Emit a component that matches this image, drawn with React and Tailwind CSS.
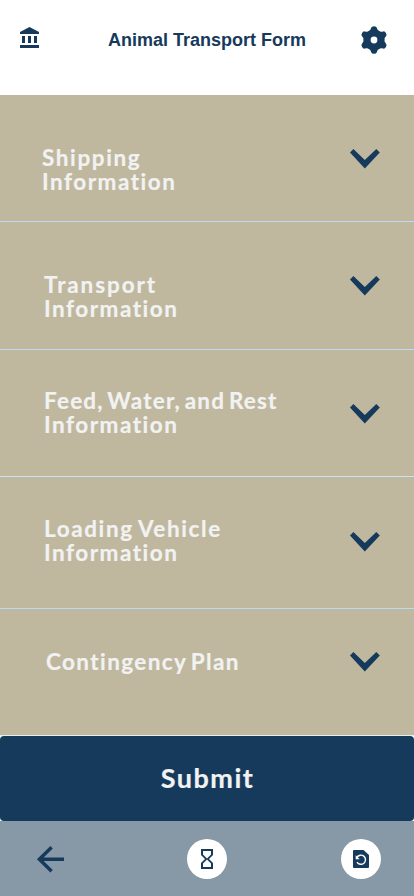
import React from "react";
import { MdHourglassEmpty } from "react-icons/md";

const sections = [
  { lines: ["Shipping", "Information"], row: "h-[127px]", text: "pl-[42px] pt-[51px]", first: "tracking-[1.6px]", icon: "pt-[53px]", line: "border-[#b9daf5]" },
  { lines: ["Transport", "Information"], row: "h-32", text: "pl-[44px] pt-[51px]", first: "tracking-[1.9px]", icon: "pt-[53px]", line: "border-[#b9daf5]" },
  { lines: ["Feed, Water, and Rest", "Information"], row: "h-[127px]", text: "pl-[44px] pt-[39px]", first: "tracking-[1.2px] [word-spacing:-3px]", icon: "pt-[53px]", line: "border-[#c9e3f3]" },
  { lines: ["Loading Vehicle", "Information"], row: "h-[132px]", text: "pl-[44px] pt-10", first: "tracking-[1.6px] [word-spacing:-2px]", icon: "pt-[54px]", line: "border-[#b9daf5]" },
  { lines: ["Contingency Plan"], row: "h-[127px]", text: "pl-[46px] pt-[41px]", first: "tracking-[1.4px] [word-spacing:-3px]", icon: "pt-[42px]", line: "border-[#e6eef0]" },
];

function Bank() {
  return (
    <svg className="h-6 w-6" viewBox="0 0 24 24" fill="currentColor">
      <path d="M4 10v7h3v-7H4zm6 0v7h3v-7h-3zM2 22h19v-3H2v3zm14-12v7h3v-7h-3zm-4.5-9L2 6v2h19V6l-9.5-5z" />
    </svg>
  );
}

function Gear() {
  return (
    <svg className="h-7 w-7" viewBox="-14 -14 28 28" fill="currentColor">
      <mask id="gear-hole">
        <rect x="-14" y="-14" width="28" height="28" fill="white" />
        <circle r="3.4" fill="black" />
      </mask>
      <g mask="url(#gear-hole)">
        {[0, 60, 120, 180, 240, 300].map((a) => (
          <path key={a} transform={`rotate(${a})`} d="M-6.1 -8.3Q-3.2 -9.4 -2.8 -12.2Q-2.5 -13.8 0 -13.8Q2.5 -13.8 2.8 -12.2Q3.2 -9.4 6.1 -8.3L6.1 0H-6.1Z" />
        ))}
      </g>
    </svg>
  );
}

function Chevron() {
  return (
    <svg className="h-[21px] w-[30px]" viewBox="0 0 30 21" fill="currentColor">
      <path d="M0 4.4L3.4 0.9L14.8 12L26.3 0.9L29.8 4.4L14.8 20.6Z" />
    </svg>
  );
}

function BackArrow() {
  return (
    <svg className="h-7 w-7" viewBox="0 0 28 28" fill="none" stroke="currentColor" strokeWidth="3.5">
      <path d="M28 14.2H3.5M15.6 2.2L3.4 14.2L15.6 26.2" />
    </svg>
  );
}

function RestorePage() {
  return (
    <svg className="h-[18px] w-4" viewBox="0 0 16 18" fill="none">
      <path d="M1 0H10.5L16 5V17Q16 18 15 18H1Q0 18 0 17V1Q0 0 1 0Z" fill="currentColor" />
      <path d="M3.9 7.4A4.6 4.6 0 1 1 4 12.2" stroke="white" strokeWidth="1.4" />
      <path d="M2.7 5.2V9.2H6.7Z" fill="white" />
    </svg>
  );
}

export default function App() {
  return (
    <div className="flex h-[896px] w-[414px] flex-col overflow-hidden bg-white font-['Liberation_Sans',sans-serif] text-[#163a5b]">
      <header className="flex h-[95px] items-start justify-between pl-[18px] pr-[26px] pt-[26px]">
        <Bank />
        <h1 className="pl-3 text-[18px] font-bold leading-7">Animal Transport Form</h1>
        <Gear />
      </header>
      <main>
        {sections.map((s) => (
          <section key={s.lines[0]} className={`flex items-start justify-between border-b bg-[#bfb89f] pr-[34px] ${s.row} ${s.line}`}>
            <h2 className={`whitespace-nowrap font-[Lato,sans-serif] text-[22.5px] font-bold leading-6 text-[#f2f2f2] [-webkit-text-stroke:0.2px_#f2f2f2] ${s.text}`}>
              {s.lines.map((l, i) => (
                <span key={l} className={`block ${i === 0 ? s.first : "tracking-[1.5px]"}`}>{l}</span>
              ))}
            </h2>
            <div className={s.icon}>
              <Chevron />
            </div>
          </section>
        ))}
      </main>
      <button className="flex h-[85px] w-full shrink-0 items-center justify-center rounded bg-[#163a5b] pl-px font-[Lato,sans-serif] text-[27px] font-bold tracking-[1.5px] text-[#f2f2f2] [-webkit-text-stroke:0.2px_#f2f2f2]">
        Submit
      </button>
      <nav className="flex h-[75px] items-start justify-between bg-[#8798a6] pl-9 pr-[33px] pt-[18px]">
        <div className="flex h-10 w-10 items-center">
          <BackArrow />
        </div>
        <div className="mr-1 flex h-10 w-10 items-center justify-center rounded-full bg-white">
          <MdHourglassEmpty className="h-6 w-6" />
        </div>
        <div className="flex h-10 w-10 items-center justify-center rounded-full bg-white">
          <RestorePage />
        </div>
      </nav>
    </div>
  );
}
